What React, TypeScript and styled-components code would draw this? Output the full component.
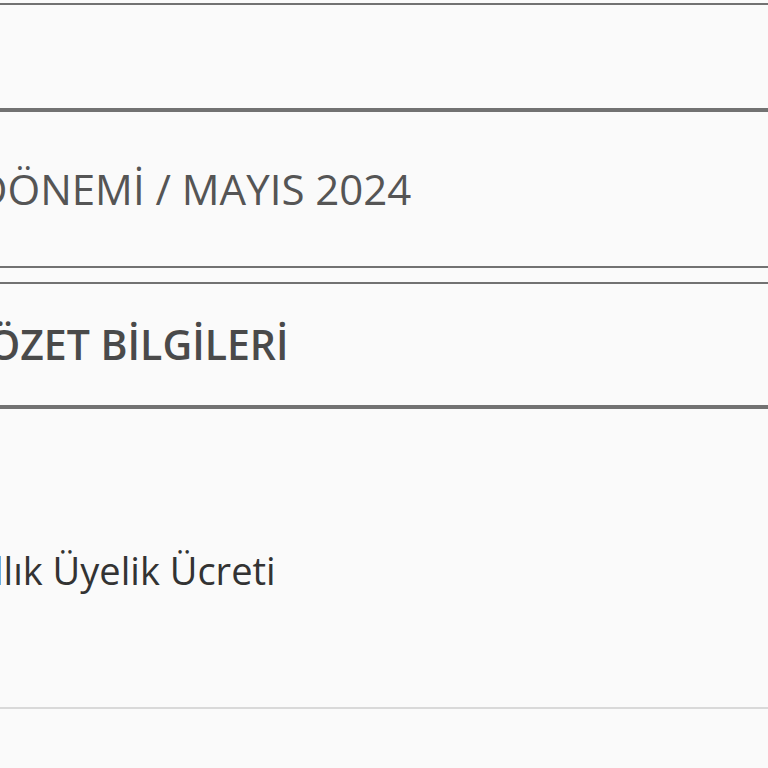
import React from 'react';
import styled, { createGlobalStyle } from 'styled-components';

const GlobalStyle = createGlobalStyle`
  html, body {
    margin: 0;
    padding: 0;
    background: #fafafa;
  }
  body {
    font-family: 'Open Sans', 'Liberation Sans', sans-serif;
    overflow: hidden;
  }
`;

const Page = styled.div`
  width: 768px;
  height: 768px;
  overflow: hidden;
  padding-top: 3px;
  box-sizing: border-box;
`;

const Panel = styled.section<{ $height: number; $light?: boolean; $offset?: number }>`
  height: ${(p) => p.$height}px;
  border-top: 2px solid #727272;
  border-bottom: 2px solid ${(p) => (p.$light ? '#d9d9d9' : '#727272')};
  box-sizing: border-box;
  display: flex;
  align-items: center;
  padding-top: ${(p) => p.$offset ?? 0}px;
  overflow: hidden;
`;

const Spacer = styled.div<{ $height: number }>`
  height: ${(p) => p.$height}px;
`;

const Text = styled.span<{ $size: number; $weight?: number; $color: string; $shift: number }>`
  margin-left: ${(p) => p.$shift}px;
  font-size: ${(p) => p.$size}px;
  font-weight: ${(p) => p.$weight ?? 400};
  color: ${(p) => p.$color};
  white-space: nowrap;
  line-height: 1;
`;

const App = () => (
  <>
    <GlobalStyle />
    <Page>
      <Panel $height={107} />
      <Panel $height={158} $offset={-2}>
        <Text $size={42} $color="#555" $shift={-23}>
          DÖNEMİ / MAYIS 2024
        </Text>
      </Panel>
      <Spacer $height={14} />
      <Panel $height={125}>
        <Text $size={41} $weight={600} $color="#4a4a4a" $shift={-12}>
          ÖZET BİLGİLERİ
        </Text>
      </Panel>
      <Panel $height={302} $light $offset={24}>
        <Text $size={38} $color="#333" $shift={-6}>
          llık Üyelik Ücreti
        </Text>
      </Panel>
    </Page>
  </>
);

export default App;
